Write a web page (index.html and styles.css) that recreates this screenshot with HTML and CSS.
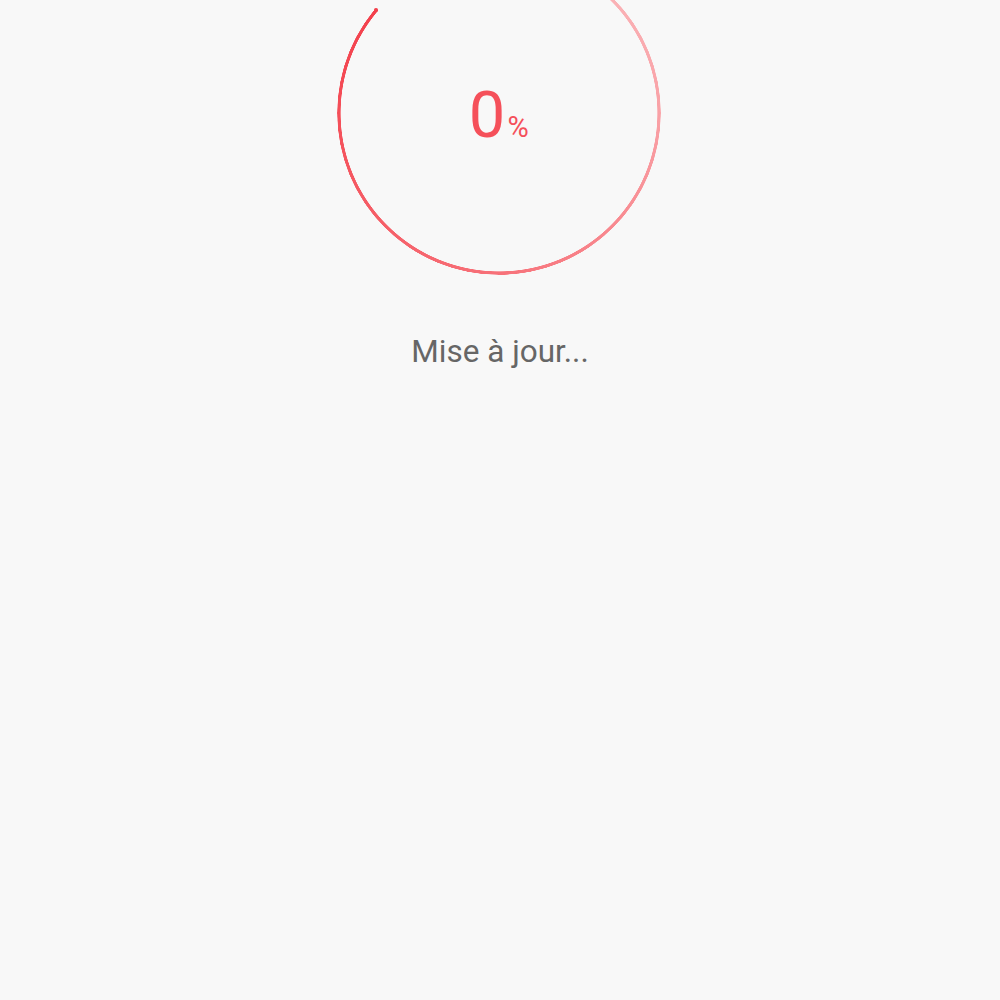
FILE: index.html
```html
<!DOCTYPE html>
<html lang="fr">

<head>
    <meta charset="UTF-8">
    <meta name="viewport" content="width=device-width, initial-scale=1.0">
    <title>Mise à jour</title>
    <link rel="stylesheet" href="styles.css">
</head>

<body>
    <div class="updater">
        <div class="ring">
            <div class="ring-track"></div>
            <span class="ring-cap"></span>
            <div class="percent">
                <span class="percent-value">0</span><span class="percent-sign">%</span>
            </div>
        </div>
        <p class="status">Mise à jour...</p>
    </div>
</body>

</html>
```

FILE: styles.css
```css
html,
body {
    margin: 0;
    background: #f8f8f8;
}
body {
    font-family: Roboto, "Noto Sans", sans-serif;
}
.updater {
    display: flex;
    flex-direction: column;
    align-items: center;
}
.ring {
    position: relative;
    width: 324px;
    height: 324px;
    margin: -49px 0 0 -1.5px;
    display: flex;
    align-items: center;
    justify-content: center;
}
.ring-track {
    position: absolute;
    inset: 0;
    border-radius: 50%;
    background: conic-gradient(from 309.9deg,
            transparent 0deg,
            transparent 60deg,
            #fcc3c6 60deg,
            #fab1b5 97deg,
            #f9a1a6 140deg,
            #f77179 230deg,
            #f44e58 320deg,
            #f3404c 360deg);
    -webkit-mask: radial-gradient(circle closest-side, transparent calc(100% - 3.9px), #000 calc(100% - 3.3px), #000 calc(100% - 0.3px), transparent 100%);
    mask: radial-gradient(circle closest-side, transparent calc(100% - 3.9px), #000 calc(100% - 3.3px), #000 calc(100% - 0.3px), transparent 100%);
}
.ring-cap {
    position: absolute;
    left: 37.2px;
    top: 57.4px;
    width: 3.6px;
    height: 3.6px;
    border-radius: 50%;
    background: #f3404c;
}
.percent {
    color: #f5505a;
    display: flex;
    align-items: baseline;
    margin-top: 5px;
    margin-left: -1px;
}
.percent-value {
    font-size: 65px;
    line-height: 1;
}
.percent-sign {
    font-size: 29px;
    margin-left: 2px;
}
.status {
    margin: 58px 0 0;
    font-size: 31.5px;
    color: #666;
    line-height: 1.2;
}
```
